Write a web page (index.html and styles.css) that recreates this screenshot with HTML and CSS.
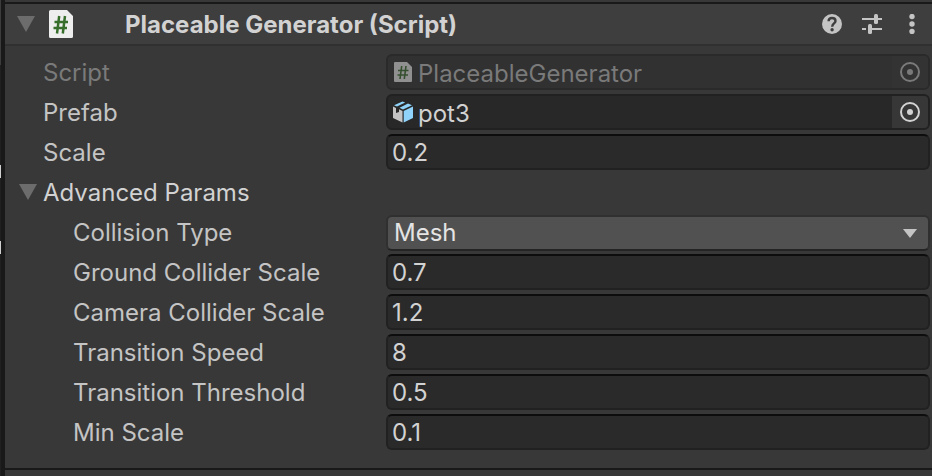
FILE: index.html
```html
<!DOCTYPE html>
<html lang="en">
<head>
<meta charset="utf-8">
<meta name="viewport" content="width=device-width, initial-scale=1">
<title>Inspector</title>
<link rel="stylesheet" href="styles.css">
</head>
<body>
<div class="window">
  <div class="edge" aria-hidden="true"><i class="mark"></i><i class="mark"></i></div>
  <main class="inspector">
    <header class="header">
      <button class="foldout" type="button" aria-label="Toggle component" aria-expanded="true">
        <svg width="18" height="16" viewBox="0 0 18 16"><path d="M0 0h18L9 16z" fill="#6c6c6c"/></svg>
      </button>
      <svg class="script-icon" width="24" height="28" viewBox="0 0 24 28" aria-hidden="true">
        <path d="M1.500 0H18l6 6v20.500a1.500 1.500 0 0 1-1.500 1.500h-21A1.500 1.500 0 0 1 0 26.500v-25A1.500 1.500 0 0 1 1.500 0z" fill="#eee"/>
        <path d="M10.200 6L8 23.500M16 6l-2.200 17.500M5.500 12H19M4.500 18H18" fill="none" stroke="#376e2c" stroke-width="2.500"/>
      </svg>
      <h1 class="title">Placeable Generator (Script)</h1>
      <button class="tool" type="button" aria-label="Help">
        <svg width="20" height="20" viewBox="0 0 20 20"><circle cx="10" cy="10" r="10" fill="#c4c4c4"/><path d="M6.600 7.300C6.600 5.200 8 4 10 4s3.500 1.200 3.500 3c0 2.500-3.300 2.500-3.300 5.700" fill="none" stroke="#3e3e3e" stroke-width="2.400"/><circle cx="10.100" cy="15.800" r="1.700" fill="#3e3e3e"/></svg>
      </button>
      <button class="tool" type="button" aria-label="Presets">
        <svg width="20" height="20" viewBox="0 0 20 20" fill="#c4c4c4"><path d="M0 4h12v2H0zM16 4h4v2h-4zM0 14h4v2H0zM8 14h12v2H8z"/><rect x="12" y="0" width="4" height="10" rx="1.500"/><rect x="6" y="10" width="4" height="10" rx="1.500"/></svg>
      </button>
      <button class="tool" type="button" aria-label="More options">
        <svg width="20" height="20" viewBox="0 0 20 20" fill="#c4c4c4"><circle cx="10" cy="2.500" r="2.700"/><circle cx="10" cy="10" r="2.700"/><circle cx="10" cy="17.500" r="2.700"/></svg>
      </button>
    </header>

    <form class="props">
      <div class="row disabled">
        <label class="label" for="script">Script</label>
        <div class="field object">
          <button class="asset" id="script" type="button" disabled>
            <svg width="20" height="20" viewBox="0 0 20 20" aria-hidden="true"><path d="M2 0h12l5 5v14a1 1 0 0 1-1 1H2a1 1 0 0 1-1-1V1a1 1 0 0 1 1-1z" fill="#909090"/><path d="M8.700 4L7 17M13 4l-1.700 13M5 8.500h10.500M4.500 13H15" fill="none" stroke="#35502f" stroke-width="1.600"/></svg>
            <span>PlaceableGenerator</span>
          </button>
          <button class="picker" type="button" aria-label="Select script" disabled>
            <svg width="20" height="20" viewBox="0 0 20 20"><circle cx="10" cy="10" r="9" fill="none" stroke="currentColor" stroke-width="2"/><circle cx="10" cy="10" r="3" fill="currentColor"/></svg>
          </button>
        </div>
      </div>
      <div class="row">
        <label class="label" for="prefab">Prefab</label>
        <div class="field object">
          <button class="asset" id="prefab" type="button">
            <svg width="20" height="22" viewBox="0 0 20 22" aria-hidden="true"><path d="M0 5.500l3 1.400v5l3-1V8.300l3.500 1.700v11.500L0 17z" fill="#c4c4c4"/><path d="M10.700 10L20 5.500V17l-9.300 4.500z" fill="#8fd3fa"/><path d="M1 4.200L9.500 .500l2.700 1L4 5.600zM6.500 6.800L15 2.400l4 1.800-9 4.400z" fill="#8fd3fa"/></svg>
            <span>pot3</span>
          </button>
          <button class="picker" type="button" aria-label="Select prefab">
            <svg width="20" height="20" viewBox="0 0 20 20"><circle cx="10" cy="10" r="9" fill="none" stroke="currentColor" stroke-width="2"/><circle cx="10" cy="10" r="3" fill="currentColor"/></svg>
          </button>
        </div>
      </div>
      <div class="row">
        <label class="label" for="scale">Scale</label>
        <input class="field number" id="scale" type="text" inputmode="decimal" value="0.2">
      </div>
      <div class="row">
        <button class="group" type="button" aria-expanded="true">
          <svg width="18" height="16" viewBox="0 0 18 16" aria-hidden="true"><path d="M0 0h18L9 16z" fill="#6c6c6c"/></svg>
          <span>Advanced Params</span>
        </button>
      </div>
      <div class="row nested">
        <label class="label" for="collision">Collision Type</label>
        <div class="dropdown">
          <select class="field select" id="collision"><option>Mesh</option></select>
          <svg class="arrow" width="14" height="9" viewBox="0 0 14 9" aria-hidden="true"><path d="M0 0h14L7 9z" fill="#c4c4c4"/></svg>
        </div>
      </div>
      <div class="row nested">
        <label class="label" for="ground">Ground Collider Scale</label>
        <input class="field number" id="ground" type="text" inputmode="decimal" value="0.7">
      </div>
      <div class="row nested">
        <label class="label" for="camera">Camera Collider Scale</label>
        <input class="field number" id="camera" type="text" inputmode="decimal" value="1.2">
      </div>
      <div class="row nested">
        <label class="label" for="speed">Transition Speed</label>
        <input class="field number" id="speed" type="text" inputmode="decimal" value="8">
      </div>
      <div class="row nested">
        <label class="label" for="threshold">Transition Threshold</label>
        <input class="field number" id="threshold" type="text" inputmode="decimal" value="0.5">
      </div>
      <div class="row nested">
        <label class="label" for="min">Min Scale</label>
        <input class="field number" id="min" type="text" inputmode="decimal" value="0.1">
      </div>
    </form>
  </main>
</div>
</body>
</html>
```
FILE: styles.css
```css
* { box-sizing: border-box; }

body {
  margin: 0;
  background: #383838;
  color: #c4c4c4;
  font: 380 24px/38px Inter, "Liberation Sans", sans-serif;
}

button, input, select { font: inherit; color: inherit; }

button {
  margin: 0;
  padding: 0;
  border: 0;
  background: none;
}

svg { display: block; flex: none; }

.window {
  display: flex;
  min-height: 100vh;
}

.edge {
  display: flex;
  flex-direction: column;
  flex: none;
  gap: 63px;
  width: 5px;
  padding-top: 165px;
  background: linear-gradient(#3c3c3c 65px, #202020 65px) 0 0 / 1px 100% no-repeat #191919;
}

.mark {
  width: 1px;
  height: 13px;
  background: #d0d0d0;
}

.inspector {
  flex: 1;
  min-width: 0;
  padding-top: 2px;
}

.header {
  display: flex;
  align-items: center;
  height: 44px;
  padding-right: 10px;
  border-top: 2px solid #191919;
  border-bottom: 2px solid #303030;
  background: #3e3e3e;
}

.foldout { margin: 0 14px 0 12px; }

.title {
  flex: 1;
  margin: 0 0 0 52px;
  padding-top: 2px;
  color: #d2d2d2;
  font-size: 24px;
  font-weight: 650;
  line-height: 36px;
  white-space: nowrap;
}

.tool { margin-left: 20px; }

.props {
  display: flex;
  flex-direction: column;
  gap: 4px;
  padding: 8px 2px 18px 0;
  border-bottom: 2px solid #191919;
}

.row {
  display: grid;
  grid-template-columns: 381px minmax(0, 1fr);
  height: 36px;
}

.label {
  padding-left: 38px;
  white-space: nowrap;
}

.nested .label { padding-left: 68px; }

.group {
  display: flex;
  gap: 6px;
  padding-left: 14px;
  color: #d2d2d2;
  white-space: nowrap;
}

.group svg { margin-top: 10px; }

.field {
  width: 100%;
  height: 36px;
  border: 2px solid #212121;
  border-radius: 6px;
  background: #2a2a2a;
  color: #d2d2d2;
}

.number {
  padding: 2px 4px 0;
  border-top-color: #0d0d0d;
}

.object {
  display: flex;
  overflow: hidden;
  background: #282828;
}

.asset {
  display: flex;
  flex: 1;
  align-items: center;
  gap: 5px;
  min-width: 0;
  padding-left: 5px;
}

.asset span { padding-top: 3px; }

.picker {
  display: grid;
  place-items: center;
  width: 36px;
  background: #373737;
}

.disabled { color: #7a7a7a; }

.disabled .field {
  border-color: #2a2a2a;
  background: #313131;
  color: #7a7a7a;
}

.disabled .picker { background: #333; }

.dropdown {
  display: grid;
  align-items: center;
}

.dropdown > * { grid-area: 1 / 1; }

.select {
  appearance: none;
  padding: 0 6px 2px;
  border-color: #303030;
  border-bottom-color: #242424;
  background: #515151;
  color: #e4e4e4;
  line-height: 32px;
}

.arrow {
  justify-self: end;
  margin-right: 13px;
  pointer-events: none;
}
```
